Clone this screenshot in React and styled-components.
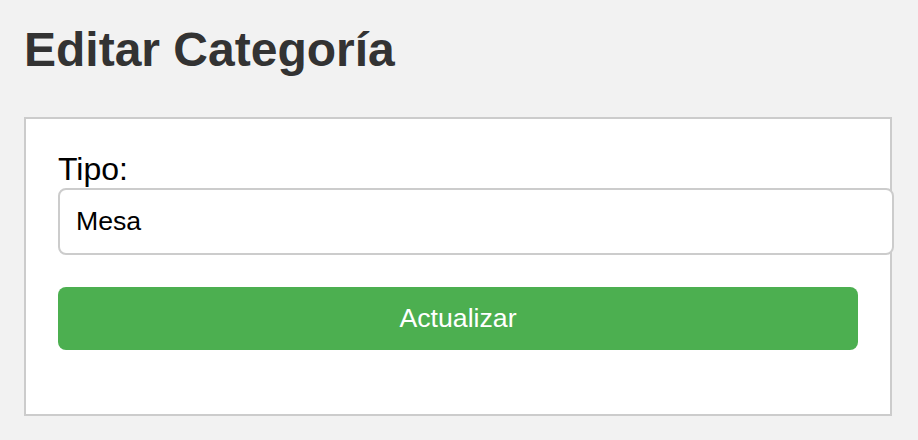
import React, { useState } from "react";
import styled, { createGlobalStyle } from "styled-components";

const GlobalStyle = createGlobalStyle`
  body {
    margin: 0;
    background: #f2f2f2;
    font-family: "Liberation Sans", Arial, sans-serif;
  }
`;

const Page = styled.div`
  padding: 22px 24px;
`;

const Title = styled.h1`
  margin: 0 0 40px;
  font-size: 48px;
  font-weight: bold;
  color: #333;
`;

const Card = styled.form`
  width: 800px;
  padding: 32px;
  background: #fff;
  border: 2px solid #ccc;
`;

const Label = styled.label`
  display: block;
  font-size: 32px;
  color: #000;
`;

const Input = styled.input`
  display: block;
  width: 100%;
  margin: 0 0 32px;
  padding: 16px;
  font-family: inherit;
  font-size: 26.67px;
  color: #000;
  background: #fff;
  border: 2px solid #ccc;
  border-radius: 8px;
  outline: none;
`;

const Button = styled.button`
  display: block;
  width: 100%;
  margin: 0 0 32px;
  padding: 16px;
  font-family: inherit;
  font-size: 26.67px;
  color: #fff;
  background: #4caf50;
  border: none;
  border-radius: 8px;
  cursor: pointer;
`;

const App = () => {
  const [tipo, setTipo] = useState("Mesa");
  return (
    <Page>
      <GlobalStyle />
      <Title>Editar Categoría</Title>
      <Card onSubmit={(e) => e.preventDefault()}>
        <Label htmlFor="tipo">Tipo:</Label>
        <Input id="tipo" value={tipo} onChange={(e) => setTipo(e.target.value)} />
        <Button type="submit">Actualizar</Button>
      </Card>
    </Page>
  );
};

export default App;
